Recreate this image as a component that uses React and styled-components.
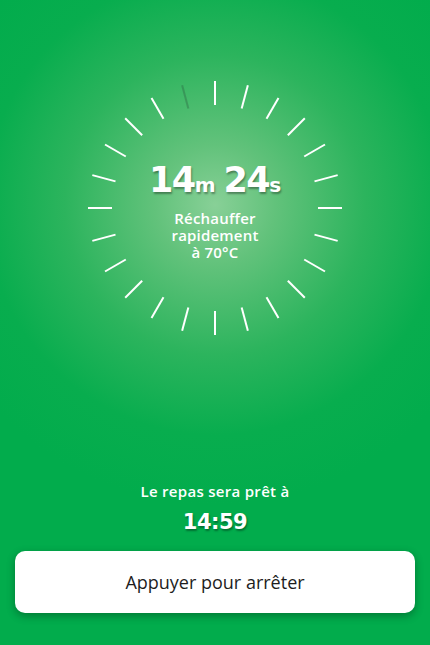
import React from "react";
import styled, { createGlobalStyle } from "styled-components";

const GlobalStyle = createGlobalStyle`
  html, body {
    margin: 0;
    padding: 0;
  }
  body {
    font-family: "Open Sans", "Liberation Sans", sans-serif;
  }
`;

const Screen = styled.div`
  width: 430px;
  height: 645px;
  box-sizing: border-box;
  padding: 80px 15px 32px;
  display: flex;
  flex-direction: column;
  align-items: center;
  background: radial-gradient(
    circle at 215px 205px,
    #88d097 0px,
    #62c27b 60px,
    #2cb45d 150px,
    #08ad4e 230px,
    #02ac4c 300px
  );
  color: #fff;
  overflow: hidden;
`;

const Dial = styled.div`
  width: 256px;
  height: 256px;
  display: grid;
  place-items: center;
  > * {
    grid-area: 1 / 1;
  }
`;

const Center = styled.div`
  display: flex;
  flex-direction: column;
  align-items: center;
  padding-top: 4px;
`;

const Countdown = styled.div`
  font-family: "DejaVu Sans", sans-serif;
  font-weight: 700;
  font-size: 35px;
  letter-spacing: -1.5px;
  line-height: 40px;
  text-shadow: 1px 2px 2px rgba(0, 0, 0, 0.35);
`;

const Unit = styled.span`
  font-size: 20px;
  letter-spacing: 0;
  margin-right: ${(p) => (p.$gap ? "8px" : "0")};
`;

const Mode = styled.div`
  margin-top: 5px;
  font-family: "Open Sans", sans-serif;
  font-weight: 600;
  font-size: 15px;
  letter-spacing: 0.2px;
  line-height: 17px;
  text-align: center;
`;

const Info = styled.div`
  margin-top: auto;
  display: flex;
  flex-direction: column;
  align-items: center;
`;

const ReadyLabel = styled.div`
  font-weight: 600;
  font-size: 15px;
  letter-spacing: 0.3px;
  line-height: 20px;
`;

const ReadyTime = styled.div`
  margin-top: 8px;
  font-family: "DejaVu Sans", sans-serif;
  font-weight: 700;
  font-size: 21px;
  letter-spacing: -0.5px;
  line-height: 26px;
  text-shadow: 1px 2px 2px rgba(0, 0, 0, 0.35);
`;

const StopButton = styled.button`
  margin-top: 16px;
  width: 400px;
  height: 62px;
  border: none;
  border-radius: 10px;
  background: #fff;
  color: #1d1d1d;
  font-family: "Open Sans", sans-serif;
  font-size: 18px;
  box-shadow: 0 3px 8px rgba(0, 0, 0, 0.3);
  cursor: pointer;
`;

const ticks = Array.from({ length: 24 }, (_, i) => i * 15);

function Ticks() {
  return (
    <svg width="256" height="256" viewBox="-128 -128 256 256">
      {ticks.map((a) => (
        <line
          key={a}
          x1="0"
          y1="-103"
          x2="0"
          y2="-127"
          stroke={a === 345 ? "rgba(40,90,60,0.35)" : "#fff"}
          strokeWidth="2"
          transform={`rotate(${a})`}
        />
      ))}
    </svg>
  );
}

export default function App() {
  return (
    <>
      <GlobalStyle />
      <Screen>
        <Dial>
          <Ticks />
          <Center>
            <Countdown>
              14<Unit $gap>m</Unit>24<Unit>s</Unit>
            </Countdown>
            <Mode>
              Réchauffer
              <br />
              rapidement
              <br />à 70°C
            </Mode>
          </Center>
        </Dial>
        <Info>
          <ReadyLabel>Le repas sera prêt à</ReadyLabel>
          <ReadyTime>14:59</ReadyTime>
          <StopButton>Appuyer pour arrêter</StopButton>
        </Info>
      </Screen>
    </>
  );
}
